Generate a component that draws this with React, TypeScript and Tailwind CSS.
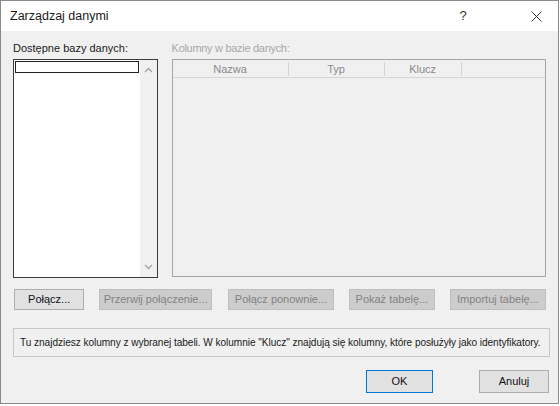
import React from 'react';

const font = { fontFamily: '"Liberation Sans", Arial, sans-serif' };

const Chevron: React.FC<{ up?: boolean }> = ({ up }) => (
  <svg width="9" height="6" viewBox="0 0 9 6" className="block">
    <path d={up ? 'M1 5 L4.5 1.5 L8 5' : 'M1 1 L4.5 4.5 L8 1'} fill="none" stroke="#a3a3a3" strokeWidth="1.3" />
  </svg>
);

const Btn: React.FC<{ label: string; w: string; disabled?: boolean; primary?: boolean }> = ({ label, w, disabled, primary }) => (
  <div
    className={`${w} h-[21px] flex items-center justify-center text-[11px] border ${
      disabled
        ? 'bg-[#cccccc] border-[#bfbfbf] text-[#838383]'
        : primary
        ? 'bg-[#e1e1e1] border-[#0078d7] text-[#111]'
        : 'bg-[#e1e1e1] border-[#adadad] text-[#111]'
    }`}
  >
    {label}
  </div>
);

export default function App() {
  return (
    <div className="w-[560px] h-[406px] bg-white" style={font}>
      <div className="w-[559px] h-[404px] border border-[#8a8a8a] flex flex-col">
        {/* Title bar */}
        <div className="h-[30px] bg-white flex items-center pl-[9px] shrink-0">
          <span className="text-[12.5px] text-[#1a1a1a] flex-1">Zarządzaj danymi</span>
          <div className="w-[50px] text-center text-[13px] text-[#333]">?</div>
          <div className="w-[26px]" />
          <div className="w-[44px] flex justify-center">
            <svg width="11" height="11" viewBox="0 0 11 11">
              <path d="M0.5 0.5 L10.5 10.5 M10.5 0.5 L0.5 10.5" stroke="#333" strokeWidth="1" />
            </svg>
          </div>
        </div>

        {/* Body */}
        <div className="flex-1 bg-[#f0f0f0] px-[12px] pt-[9px] flex flex-col">
          <div className="flex gap-[14px]">
            <div className="w-[146px] flex flex-col">
              <div className="h-[19px] text-[11px] text-[#1a1a1a]">Dostępne bazy danych:</div>
              <div className="h-[219px] border border-[#3c3c3c] bg-white flex">
                <div className="flex-1 pt-[1px] pl-[1px] pr-[1px]">
                  <div className="h-[12px] border border-[#222]"></div>
                </div>
                <div className="w-[17px] bg-[#f0f0f0] flex flex-col items-center justify-between py-[7px]">
                  <Chevron up />
                  <Chevron />
                </div>
              </div>
            </div>
            <div className="w-[378px] flex flex-col">
              <div className="h-[19px] text-[11px] text-[#a8a8a8] tracking-[-0.3px]">Kolumny w bazie danych:</div>
              <div className="h-[218px] border border-[#a5a5a5] bg-[#f0f0f0] flex flex-col">
                <div className="h-[18px] border-b border-[#d5d5d5] flex items-center text-[11px] text-[#8a8a8a]">
                  <div className="w-[116px] text-center border-r border-[#d5d5d5] h-[14px] leading-[14px]">Nazwa</div>
                  <div className="w-[96px] text-center border-r border-[#d5d5d5] h-[14px] leading-[14px]">Typ</div>
                  <div className="w-[77px] text-center border-r border-[#d5d5d5] h-[14px] leading-[14px]">Klucz</div>
                </div>
              </div>
            </div>
          </div>

          {/* Action buttons */}
          <div className="flex mt-[11px] pl-[1px]">
            <Btn label="Połącz..." w="w-[71px]" />
            <div className="w-[15px]" />
            <Btn label="Przerwij połączenie..." w="w-[114px]" disabled />
            <div className="w-[16px]" />
            <Btn label="Połącz ponownie..." w="w-[107px]" disabled />
            <div className="w-[15px]" />
            <Btn label="Pokaż tabelę..." w="w-[87px]" disabled />
            <div className="w-[15px]" />
            <Btn label="Importuj tabelę..." w="w-[97px]" disabled />
          </div>

          {/* Info box */}
          <div className="mt-[18px] w-[537px] h-[29px] border border-[#c8c8c8] bg-[#f0f0f0] flex items-center pl-[6px] text-[10.1px] tracking-[-0.05px] text-[#1a1a1a] whitespace-nowrap overflow-hidden">
            Tu znajdziesz kolumny z wybranej tabeli. W kolumnie "Klucz" znajdują się kolumny, które posłużyły jako identyfikatory.
          </div>

          {/* Dialog buttons */}
          <div className="flex justify-end mt-[13px] mr-[-3px]">
            <Btn label="OK" w="w-[67px] h-[23px]" primary />
            <div className="w-[46px]" />
            <Btn label="Anuluj" w="w-[70px] h-[23px]" />
          </div>
        </div>
      </div>
    </div>
  );
}
